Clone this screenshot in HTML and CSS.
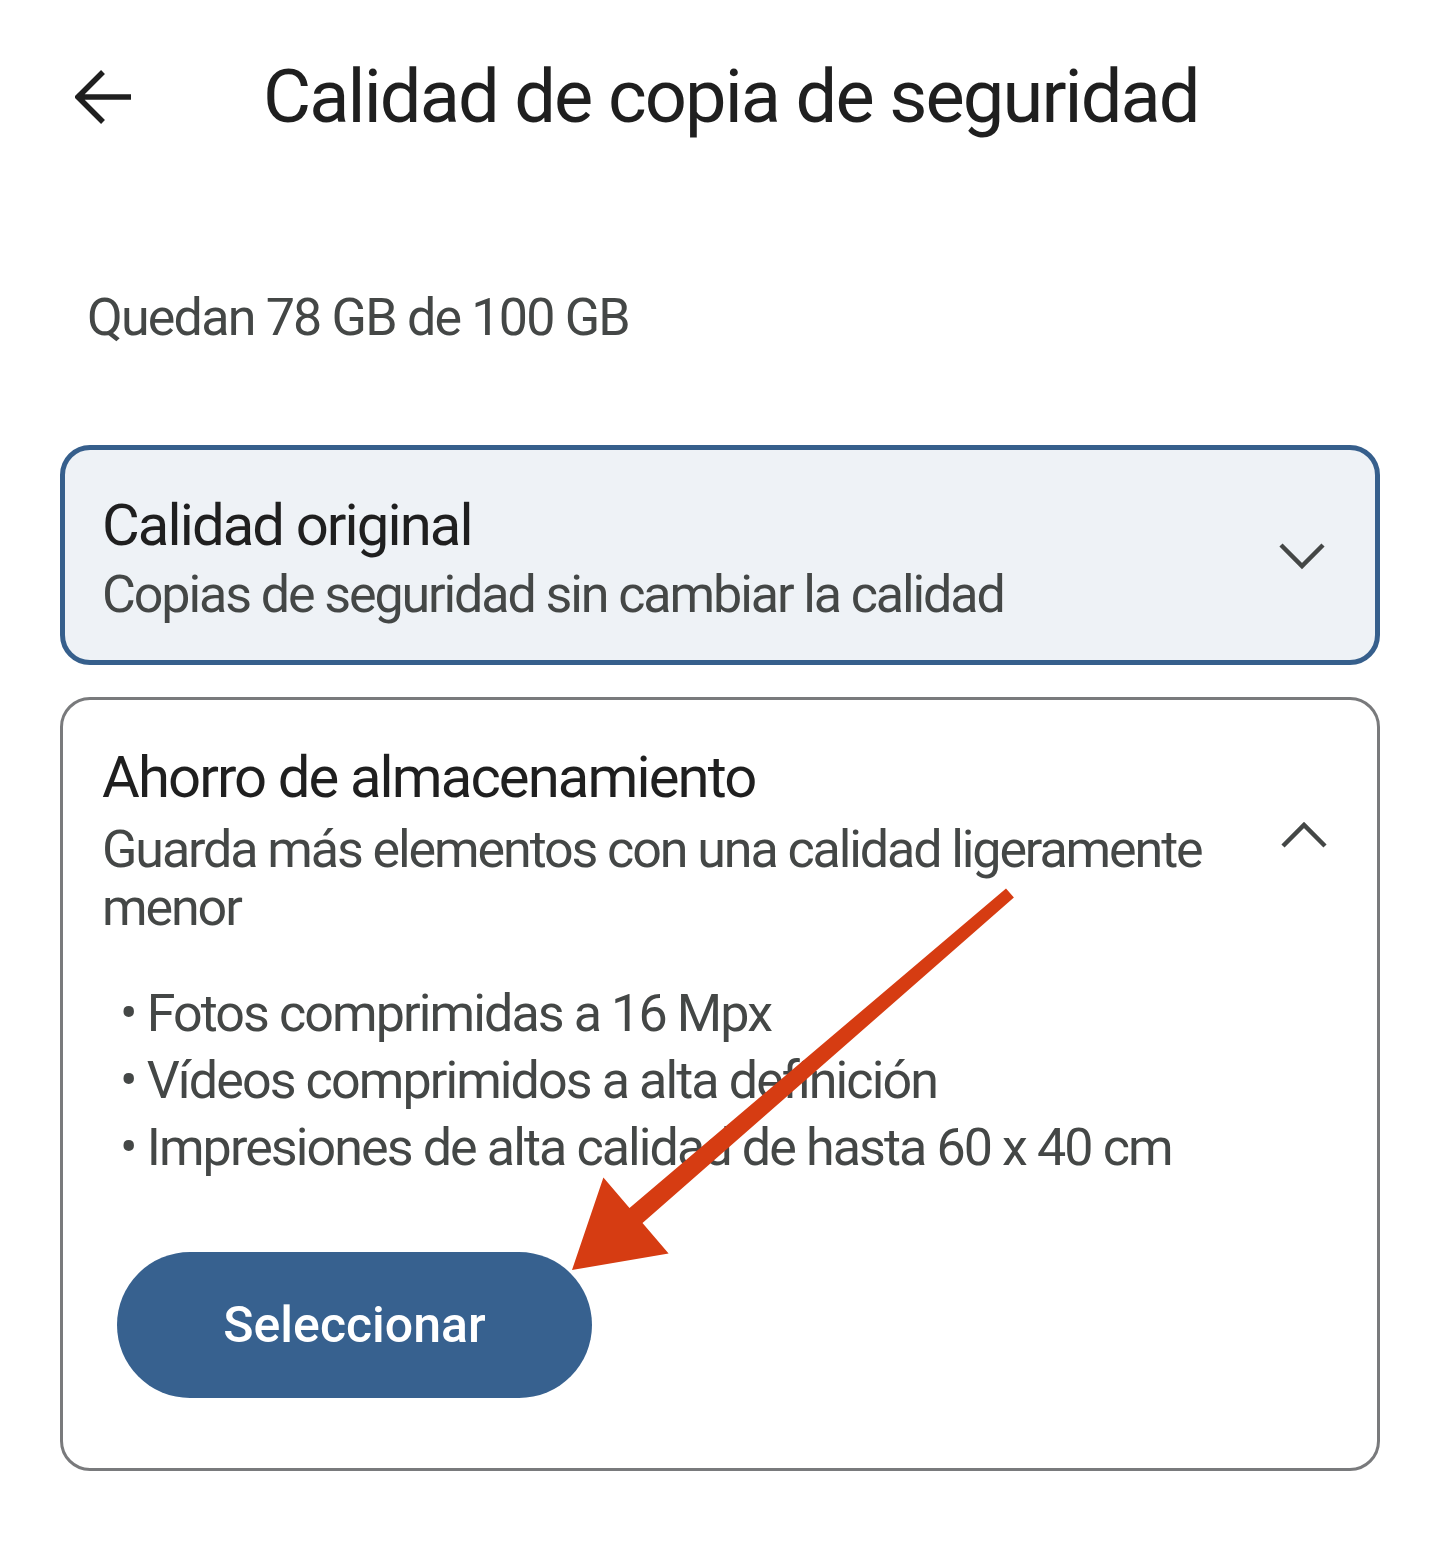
FILE: index.html
```html
<!DOCTYPE html>
<html lang="es">
<head>
    <meta charset="UTF-8">
    <meta name="viewport" content="width=device-width, initial-scale=1.0">
    <title>Calidad de copia de seguridad</title>
    <link rel="stylesheet" href="styles.css">
</head>
<body>
    <div class="page">
        <header class="topbar">
            <button class="back" aria-label="Atrás">
                <svg width="58" height="56" viewBox="0 0 58 56">
                    <path d="M56 28H4M28 3L3 28l25 25" fill="none" stroke="#1f1f1f" stroke-width="5.5" stroke-linejoin="miter"/>
                </svg>
            </button>
            <h1 class="title">Calidad de copia de seguridad</h1>
        </header>

        <p class="storage">Quedan 78 GB de 100 GB</p>

        <!-- Opción seleccionada -->
        <div class="option option-selected">
            <div class="option-head">
                <div class="option-text">
                    <div class="option-name">Calidad original</div>
                    <div class="option-desc">Copias de seguridad sin cambiar la calidad</div>
                </div>
                <svg class="chevron" width="48" height="30" viewBox="0 0 48 30">
                    <path d="M3 5l21 21L45 5" fill="none" stroke="#444746" stroke-width="4.5"/>
                </svg>
            </div>
        </div>

        <!-- Opción desplegada -->
        <div class="option">
            <div class="option-head">
                <div class="option-text">
                    <div class="option-name">Ahorro de almacenamiento</div>
                    <div class="option-desc">Guarda más elementos con una calidad ligeramente menor</div>
                </div>
                <svg class="chevron chevron-up" width="48" height="30" viewBox="0 0 48 30">
                    <path d="M3 26L24 5l21 21" fill="none" stroke="#444746" stroke-width="4.5"/>
                </svg>
            </div>
            <ul class="features">
                <li>• Fotos comprimidas a 16 Mpx</li>
                <li>• Vídeos comprimidos a alta definición</li>
                <li>• Impresiones de alta calidad de hasta 60 x 40 cm</li>
            </ul>
            <button class="select-btn">Seleccionar</button>
        </div>
    </div>

    <!-- Flecha de anotación -->
    <svg class="annotation" width="1440" height="1545" viewBox="0 0 1440 1545">
        <polygon points="1006,888.5 629.5,1207.9 603.4,1177.6 572,1270 668.6,1253.4 642.5,1223.1 1013.9,897.5" fill="#d63c12"/>
    </svg>
</body>
</html>
```

FILE: styles.css
```css
/* Global */
body {
    margin: 0;
    background: #ffffff;
    font-family: Roboto, 'Noto Sans', sans-serif;
    color: #1f1f1f;
    position: relative;
    min-height: 1545px;
}

.page {
    padding: 0 60px;
}

/* Top bar */
.topbar {
    display: flex;
    align-items: center;
    height: 74px;
    padding-top: 60px;
}

.back {
    display: flex;
    align-items: center;
    margin-left: 15px;
    padding: 0;
    border: none;
    background: none;
}

.title {
    margin: 0 0 0 130px;
    font-size: 74px;
    line-height: 74px;
    font-weight: 400;
    letter-spacing: -1.9px;
    color: #1f1f1f;
}

.storage {
    margin: 158px 0 0 27px;
    font-size: 52px;
    line-height: 52px;
    letter-spacing: -1.8px;
    color: #444746;
}

/* Options */
.option {
    margin-top: 32px;
    padding: 48px 49px 70px 39px;
    border: 3px solid #797a7c;
    border-radius: 30px;
    background: #ffffff;
}

.option-selected {
    margin-top: 101px;
    padding: 46px 49px 39px 37px;
    border: 5px solid #365f8c;
    background: #eef2f6;
}

.option-head {
    display: flex;
    align-items: center;
    gap: 40px;
}

.option-text {
    flex: 1;
}

.option-name {
    font-size: 58px;
    line-height: 58px;
    letter-spacing: -1.9px;
    color: #1f1f1f;
}

.option-desc {
    margin-top: 15px;
    font-size: 52px;
    line-height: 58px;
    letter-spacing: -2.1px;
    color: #444746;
}

.option-selected .option-desc {
    line-height: 52px;
}

.chevron {
    flex-shrink: 0;
    margin-bottom: 8px;
}

.chevron-up {
    margin-bottom: 16px;
}

/* Feature list */
.features {
    list-style: none;
    margin: 43px 0 0 18px;
    padding: 0;
    font-size: 52px;
    line-height: 67px;
    letter-spacing: -1.9px;
    color: #444746;
}

.select-btn {
    display: block;
    margin: 71px 0 0 15px;
    width: 475px;
    height: 146px;
    border: none;
    border-radius: 73px;
    background: #37618f;
    color: #ffffff;
    font-family: Roboto, sans-serif;
    font-size: 50px;
    font-weight: 500;
}

/* Annotation overlay */
.annotation {
    position: absolute;
    top: 0;
    left: 0;
    pointer-events: none;
}
```
